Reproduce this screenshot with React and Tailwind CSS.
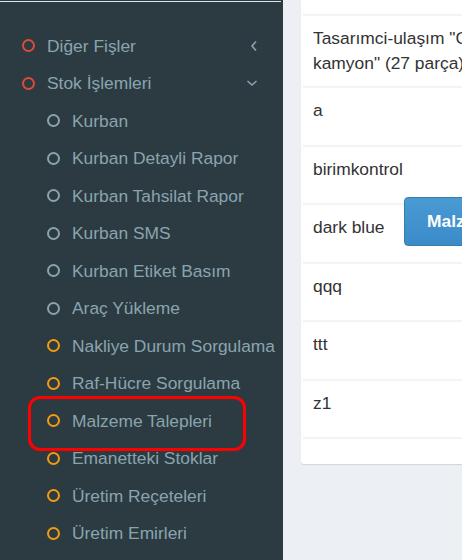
import React from 'react';

const menu = [
  { label: 'Diğer Fişler', level: 0, color: 'border-[#dd4b39]', arrow: 'left' },
  { label: 'Stok İşlemleri', level: 0, color: 'border-[#dd4b39]', arrow: 'down' },
  { label: 'Kurban', level: 1, color: 'border-[#8aa4af]' },
  { label: 'Kurban Detayli Rapor', level: 1, color: 'border-[#8aa4af]' },
  { label: 'Kurban Tahsilat Rapor', level: 1, color: 'border-[#8aa4af]' },
  { label: 'Kurban SMS', level: 1, color: 'border-[#8aa4af]' },
  { label: 'Kurban Etiket Basım', level: 1, color: 'border-[#8aa4af]' },
  { label: 'Araç Yükleme', level: 1, color: 'border-[#8aa4af]' },
  { label: 'Nakliye Durum Sorgulama', level: 1, color: 'border-[#f39c12]' },
  { label: 'Raf-Hücre Sorgulama', level: 1, color: 'border-[#f39c12]' },
  { label: 'Malzeme Talepleri', level: 1, color: 'border-[#f39c12]' },
  { label: 'Emanetteki Stoklar', level: 1, color: 'border-[#f39c12]' },
  { label: 'Üretim Reçeteleri', level: 1, color: 'border-[#f39c12]' },
  { label: 'Üretim Emirleri', level: 1, color: 'border-[#f39c12]' },
];

const rows = ['a', 'birimkontrol', 'dark blue', 'qqq', 'ttt', 'z1'];

function Arrow({ dir }) {
  if (dir === 'left') {
    return (
      <svg width="8" height="12" viewBox="0 0 8 12" className="absolute left-[250px]">
        <path d="M6 1.5 L2 6 L6 10.5" fill="none" stroke="#8aa4af" strokeWidth="1.6" />
      </svg>
    );
  }
  return (
    <svg width="12" height="8" viewBox="0 0 12 8" className="absolute left-[246px]">
      <path d="M1.5 2 L6 6 L10.5 2" fill="none" stroke="#8aa4af" strokeWidth="1.6" />
    </svg>
  );
}

function MenuItem({ item }) {
  return (
    <li
      className={`relative flex items-center h-[37.5px] ${
        item.level === 0 ? 'pl-[22px]' : 'pl-[47px]'
      }`}
    >
      <span className={`box-border w-[13px] h-[13px] rounded-full border-[2.6px] ${item.color}`} />
      <span className="ml-[12px] whitespace-nowrap">{item.label}</span>
      {item.arrow && <Arrow dir={item.arrow} />}
    </li>
  );
}

export default function App() {
  return (
    <div
      className="flex w-screen h-screen overflow-hidden bg-[#ecf0f5] text-[17.4px]"
      style={{ fontFamily: '"Liberation Sans", Arial, sans-serif' }}
    >
      <aside className="relative w-[283px] shrink-0 bg-[#2c3b41] text-[#8aa4af]">
        <div className="mt-px h-px w-[281px] bg-[#dfe3e6]" />
        <ul className="pt-[25px]">
          {menu.map(item => (
            <MenuItem key={item.label} item={item} />
          ))}
        </ul>
        <div className="absolute left-[28px] top-[396px] w-[218px] h-[55px] rounded-[12px] border-[3px] border-[#ff0000]" />
      </aside>

      <main className="flex-1 pl-[18px]">
        <div className="w-[300px] bg-white rounded-b-[3px] shadow-[0_1px_1px_rgba(0,0,0,0.12)] pl-[2px] text-[#333] leading-[25px]">
          <div className="h-[14px]" />
          <div className="h-[72px] border-t-2 border-[#f4f4f4] pl-[10px] pt-[10px] whitespace-nowrap">
            Tasarımci-ulaşım "Canter
            <br />
            kamyon" (27 parça) Isuzu
          </div>
          {rows.map(r => (
            <div
              key={r}
              className="relative h-[58.5px] border-t-2 border-[#f4f4f4] pl-[10px] pt-[10px] whitespace-nowrap"
            >
              {r}
              {r === 'dark blue' && (
                <button
                  type="button"
                  className="absolute left-[101px] top-[-8px] h-[49px] w-[160px] rounded-[4px] border border-[#367fa9] bg-gradient-to-b from-[#4a9bd4] to-[#3a8bc8] text-left pl-[22px] font-bold text-white"
                >
                  Malzeme Talebi
                </button>
              )}
            </div>
          ))}
          <div className="h-[27px] border-t-2 border-[#f4f4f4]" />
        </div>
      </main>
    </div>
  );
}
